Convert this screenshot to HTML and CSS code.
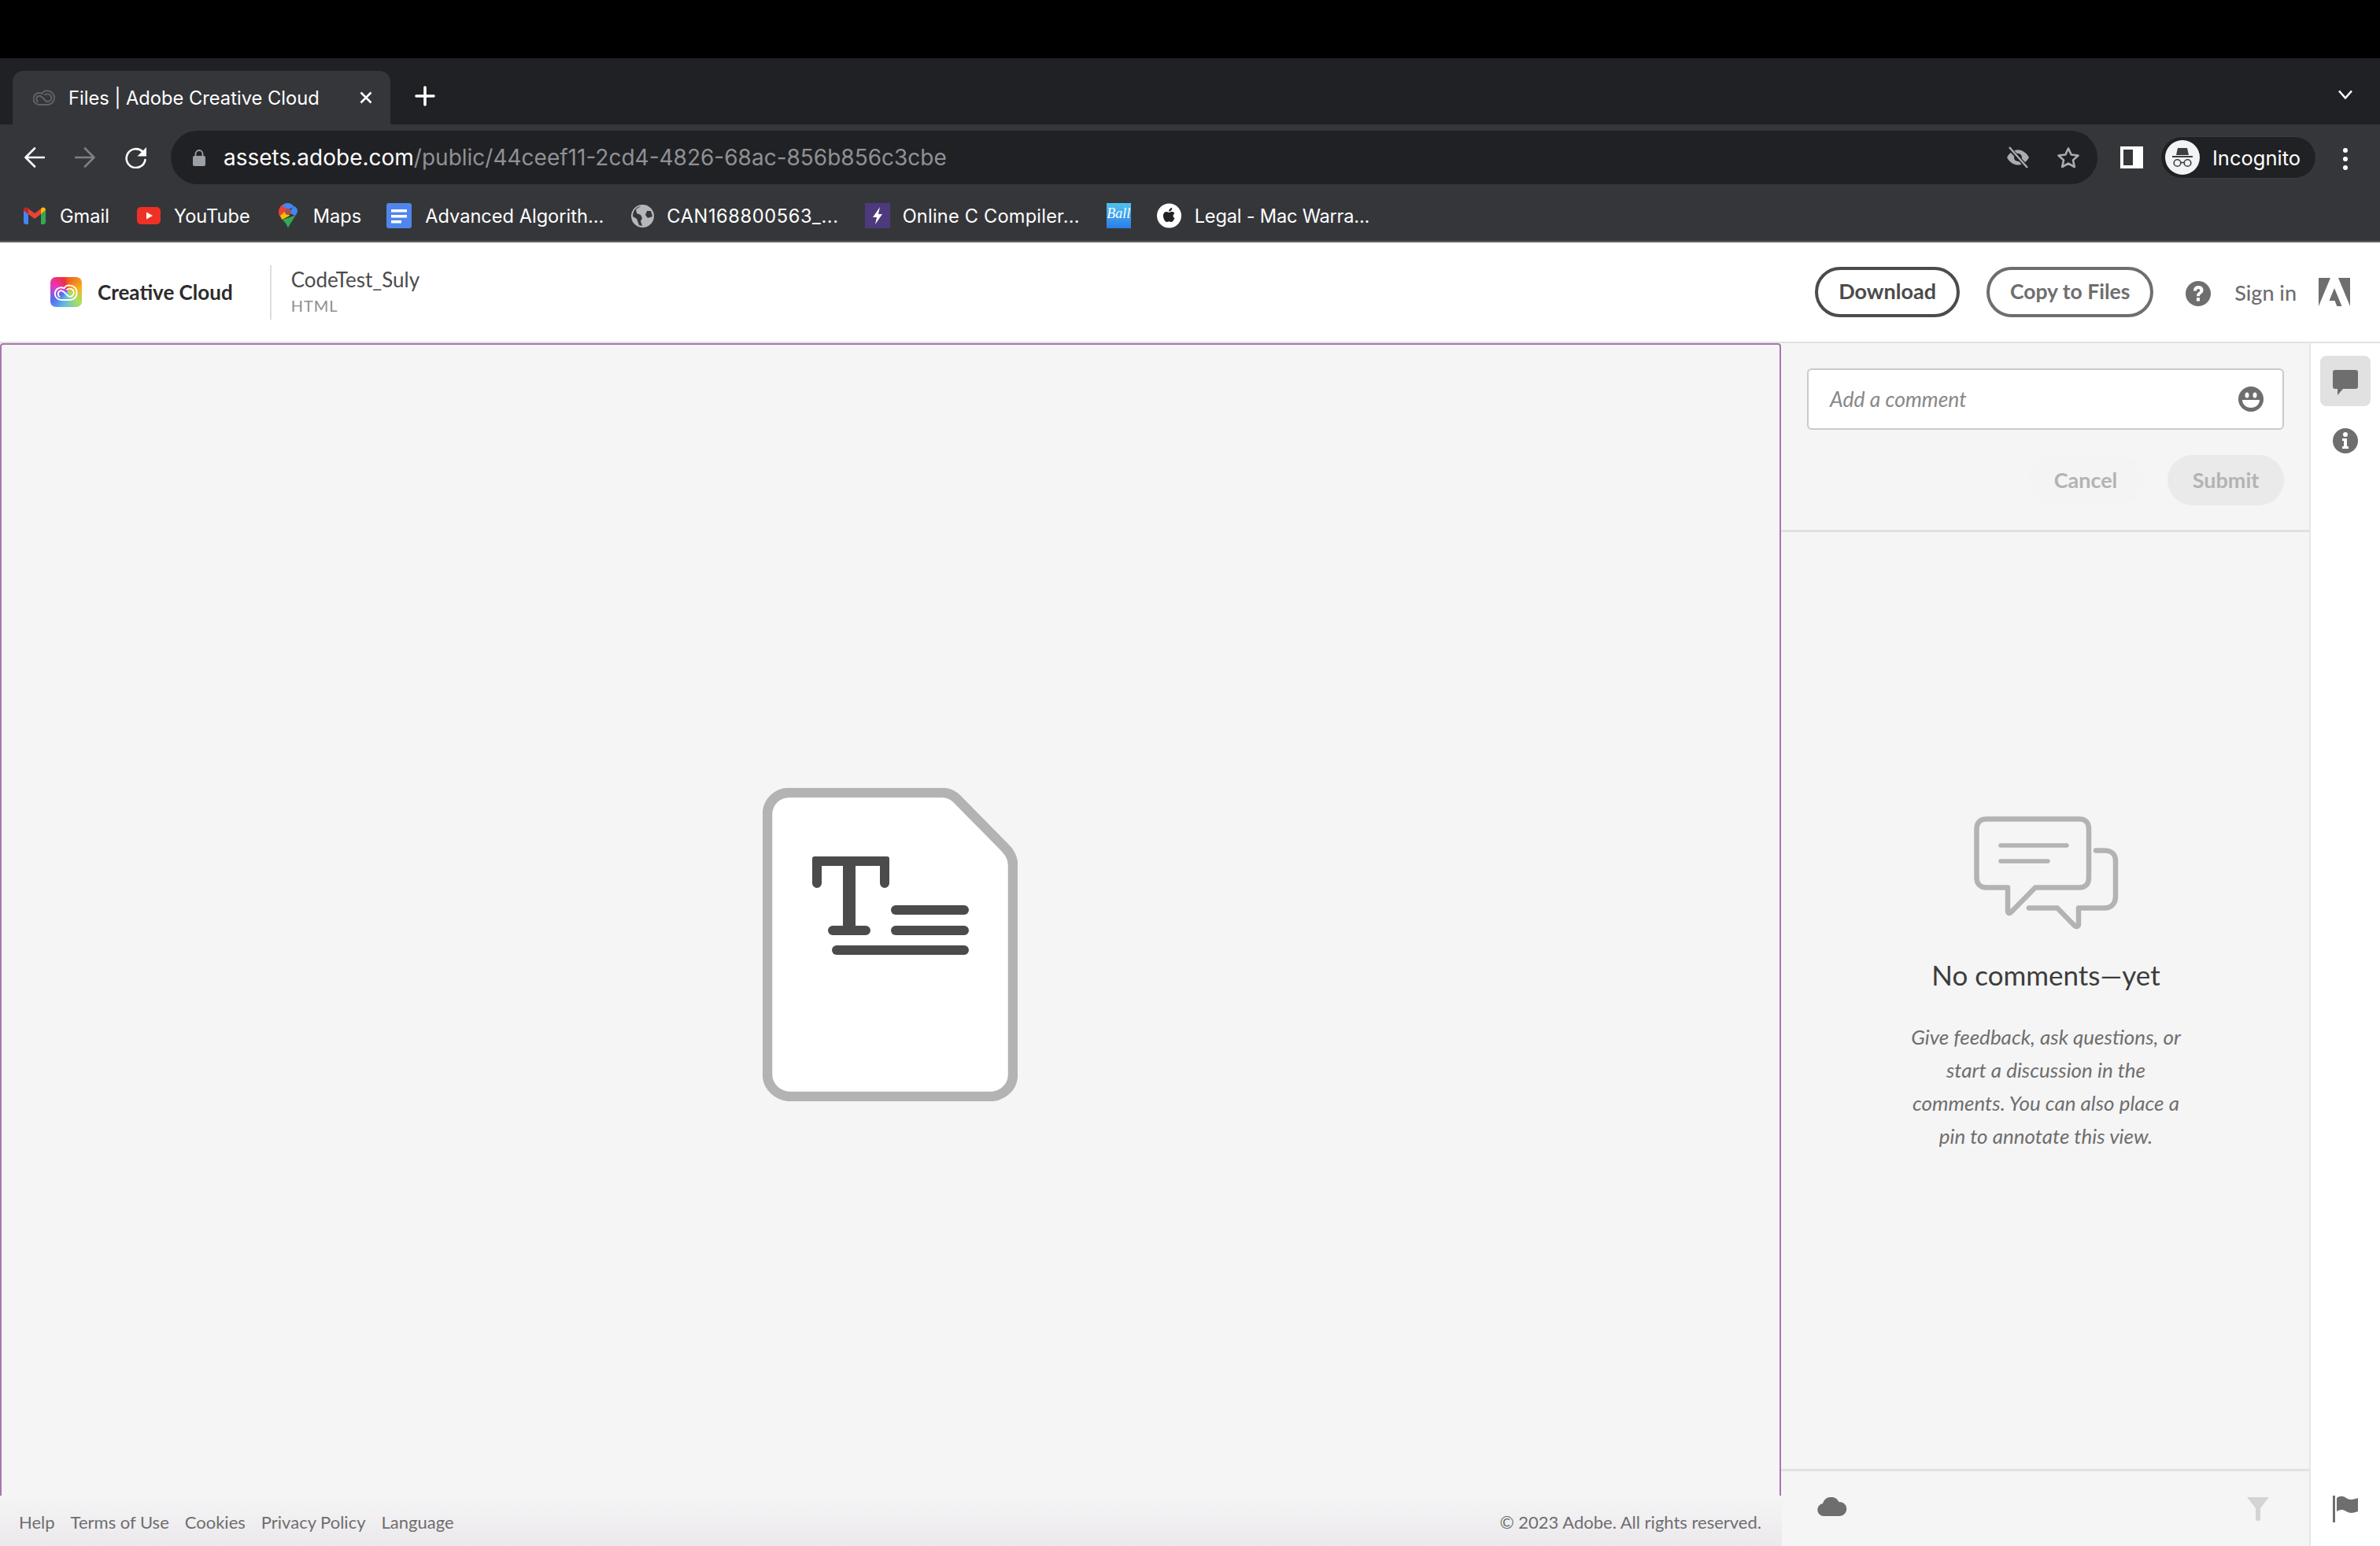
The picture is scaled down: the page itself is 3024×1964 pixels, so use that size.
FILE: index.html
```html
<!DOCTYPE html>
<html lang="en">
<head>
    <meta charset="UTF-8">
    <meta name="viewport" content="width=device-width, initial-scale=1.0">
    <title>Files | Adobe Creative Cloud</title>
    <link rel="stylesheet" href="styles.css">
</head>
<body>
    <div class="black-bar"></div>

    <!-- Browser tabs -->
    <div class="tab-strip">
        <div class="tab">
            <svg class="tab-favicon" width="28" height="20" viewBox="0 0 28 20" fill="none" stroke="#616266" stroke-width="2">
                <path d="M8 19A7.500 7.500 0 1 1 8 4C9.500 4 10.500 4.300 11.500 5C13 2.500 16 1 19 1.500C24 2 27 6 27 10C27 15.500 23 19 19 19Z"/>
                <path d="M6.500 15.500C3.500 14 3.500 9 7 8C9 7.300 10.500 8.500 12 10L15.500 13.500C17 15 19.500 15.500 21.500 14C24 12 24 8.500 21.500 6.500C19.500 5 16.500 5 14.500 7"/>
            </svg>
            <span class="tab-title">Files | Adobe Creative Cloud</span>
            <svg class="tab-close" width="16" height="16" viewBox="0 0 16 16" stroke="#fff" stroke-width="2.600">
                <path d="M1.500 1.500l13 13M14.500 1.500l-13 13"/>
            </svg>
        </div>
        <svg class="new-tab" width="26" height="26" viewBox="0 0 26 26" stroke="#fff" stroke-width="3.600" stroke-linecap="round">
            <path d="M13 2v22M2 13h22"/>
        </svg>
        <svg class="tab-list" width="20" height="12" viewBox="0 0 20 12" fill="none" stroke="#fff" stroke-width="2.600">
            <path d="M2 1.500l8 9 8-9"/>
        </svg>
    </div>

    <!-- Toolbar with address bar -->
    <div class="toolbar">
        <svg class="nav-back" width="26" height="26" viewBox="0 0 26 26" fill="none" stroke="#fff" stroke-width="2.600" stroke-linecap="round" stroke-linejoin="round">
            <path d="M25 13H2M13 1.500L1.500 13 13 24.500"/>
        </svg>
        <svg class="nav-forward" width="26" height="26" viewBox="0 0 26 26" fill="none" stroke="#7e7f82" stroke-width="2.600" stroke-linecap="round" stroke-linejoin="round">
            <path d="M1 13h23M13 1.500L24.500 13 13 24.500"/>
        </svg>
        <svg class="nav-reload" width="28" height="28" viewBox="0 0 28 28" fill="none">
            <path d="M22 6.500A12 12 0 1 0 25.500 17" stroke="#fff" stroke-width="2.600" stroke-linecap="round"/>
            <path d="M27 1v11.500H15.500z" fill="#fff"/>
        </svg>
        <div class="address-bar">
            <svg class="lock" width="16" height="21" viewBox="0 0 16 21">
                <path d="M3.500 8V5.500a4.500 4.500 0 0 1 9 0V8" fill="none" stroke="#9aa0a6" stroke-width="1.800"/>
                <rect x="0" y="8" width="16" height="13" rx="2" fill="#9aa0a6"/>
            </svg>
            <span class="url"><span class="url-host">assets.adobe.com</span>/public/44ceef11-2cd4-4826-68ac-856b856c3cbe</span>
            <svg class="eye-off" width="30" height="28" viewBox="0 0 30 28" fill="none">
                <path d="M1 14C5 7 10 4.500 15 4.500S25 7 29 14C25 21 20 23.500 15 23.500S5 21 1 14Z" fill="#aaadb0"/>
                <circle cx="15" cy="14" r="5" fill="#202124"/>
                <path d="M3 1l24 26" stroke="#202124" stroke-width="5"/>
                <path d="M4 1l23 26" stroke="#aaadb0" stroke-width="2.400"/>
            </svg>
            <svg class="star" width="30" height="29" viewBox="0 0 30 29" fill="none" stroke="#aaadb0" stroke-width="2.600" stroke-linejoin="round">
                <path d="M15 2.500l3.700 8 8.800 1-6.500 5.900 1.800 8.600L15 21.600 7.200 26l1.800-8.600L2.500 11.500l8.800-1z"/>
            </svg>
        </div>
        <div class="side-panel-icon"></div>
        <div class="profile-pill">
            <svg class="incognito-avatar" width="44" height="44" viewBox="0 0 44 44">
                <circle cx="22" cy="22" r="22" fill="#f1f3f4"/>
                <path d="M14 19l2-9h12l2 9z" fill="#3c4043"/>
                <rect x="9" y="20" width="26" height="2" fill="#3c4043"/>
                <circle cx="15.500" cy="29" r="4.300" fill="none" stroke="#3c4043" stroke-width="1.600"/>
                <circle cx="28.500" cy="29" r="4.300" fill="none" stroke="#3c4043" stroke-width="1.600"/>
                <path d="M19.800 28.500h4.400" stroke="#3c4043" stroke-width="1.600"/>
            </svg>
            <span class="profile-name">Incognito</span>
        </div>
        <div class="menu-dots"><i></i><i></i><i></i></div>
    </div>

    <!-- Bookmarks -->
    <div class="bookmarks">
        <a class="bookmark bm-gmail">
            <svg width="28" height="22" viewBox="0 0 28 22">
                <path d="M0 4v15a3 3 0 0 0 2 3h4V9z" fill="#4285f4"/>
                <path d="M28 4v15a3 3 0 0 1-2 3h-4V9z" fill="#34a853"/>
                <path d="M0 4l6 5 8 6 8-6V2l-8 6-8-6-1-1C2 0 0 1 0 4z" fill="#ea4335"/>
                <path d="M22 2v7l6-5c0-3-2-4-4-3.500z" fill="#fbbc04"/>
                <path d="M0 4l6 5V2L5 1C2 0 0 1 0 4z" fill="#c5221f"/>
            </svg>
            <span>Gmail</span>
        </a>
        <a class="bookmark bm-youtube">
            <svg width="30" height="22" viewBox="0 0 30 22">
                <rect width="30" height="22" rx="5" fill="#ee3124"/>
                <path d="M12 6.500l8 4.500-8 4.500z" fill="#fff"/>
            </svg>
            <span>YouTube</span>
        </a>
        <a class="bookmark bm-maps">
            <svg width="24" height="32" viewBox="0 0 24 32">
                <path d="M12 0C5 0 0 5 0 11.500c0 2.500.8 4.300 2 6L12 8z" fill="#ea4335"/>
                <path d="M12 0c-3 0-6 1-8 3.500L12 8l8-3C18 2 15.500 0 12 0z" fill="#4285f4"/>
                <path d="M20 4l-8 8 9 4c2-2 3-4 3-6.500 0-2-1.500-4-4-5.500z" fill="#4285f4"/>
                <path d="M2 16l8-7 4 7-9.500 5C3.500 19.500 2.500 18 2 16z" fill="#fbbc04"/>
                <path d="M21.500 15.500L5 21c2.500 3 5.500 6 7 11 1.500-5 6-9.500 9.500-16.500z" fill="#34a853"/>
                <circle cx="12" cy="11" r="4" fill="#a5524a"/>
            </svg>
            <span>Maps</span>
        </a>
        <a class="bookmark bm-docs">
            <svg width="32" height="32" viewBox="0 0 32 32">
                <rect width="32" height="32" rx="3" fill="#4f86ec"/>
                <path d="M6 8h20v3.500H6zM6 15h20v3.500H6zM6 22h13v3.500H6z" fill="#fff"/>
            </svg>
            <span>Advanced Algorith...</span>
        </a>
        <a class="bookmark bm-globe">
            <svg width="29" height="29" viewBox="0 0 29 29">
                <circle cx="14.500" cy="14.500" r="14.500" fill="#b4b6b9"/>
                <path d="M12 2L6 6l1 5 5 2 2 4-2 4 2 6-4-1-3-8-5-3C2 8 6 3 12 2zM20 8l5 0 2 7-6 2-3-4z" fill="#35363a"/>
            </svg>
            <span>CAN168800563_...</span>
        </a>
        <a class="bookmark bm-bolt">
            <svg width="32" height="32" viewBox="0 0 32 32">
                <rect width="32" height="32" fill="#4d3a7d"/>
                <path d="M19 5l-9 13h5l-2 9 9-13h-5z" fill="#fff"/>
            </svg>
            <span>Online C Compiler...</span>
        </a>
        <a class="bookmark bm-ball">
            <span class="ball-icon">Ball</span>
        </a>
        <a class="bookmark bm-legal">
            <svg width="31" height="32" viewBox="0 0 31 32">
                <circle cx="15.500" cy="16" r="15.500" fill="#fff"/>
                <path d="M20.500 16.500c0-2.500 2-3.500 2-3.500-1-1.700-3-2-3.700-2-1.500 0-2.600.9-3.400.9S13.400 11 12.200 11c-1.700 0-4.700 1.500-4.200 6 .4 3.300 2.500 7 4.400 7 1 0 1.700-.8 3-.8s1.800.8 3 .8c1.800 0 3.500-3.500 4-5-.1 0-1.900-.8-1.900-2.500zM18.200 9.300c.8-1 1.200-2 1-3.300-1 0-2.200.7-3 1.600-.7.800-1.200 2-1 3.100 1.100.1 2.300-.5 3-1.400z" fill="#202124"/>
            </svg>
            <span>Legal - Mac Warra...</span>
        </a>
    </div>

    <!-- Adobe header -->
    <header class="app-header">
        <div class="cc-logo">
            <svg width="28" height="20" viewBox="0 0 28 20" fill="none" stroke="#fff" stroke-width="1.800">
                <path d="M8 19A7.500 7.500 0 1 1 8 4C9.500 4 10.500 4.300 11.500 5C13 2.500 16 1 19 1.500C24 2 27 6 27 10C27 15.500 23 19 19 19Z"/>
                <path d="M6.500 15.500C3.500 14 3.500 9 7 8C9 7.300 10.500 8.500 12 10L15.500 13.500C17 15 19.500 15.500 21.500 14C24 12 24 8.500 21.500 6.500C19.500 5 16.500 5 14.500 7"/>
            </svg>
        </div>
        <span class="cc-name">Creative Cloud</span>
        <div class="file-info">
            <div class="file-name">CodeTest_Suly</div>
            <div class="file-type">HTML</div>
        </div>
        <button class="pill-btn download-btn">Download</button>
        <button class="pill-btn copy-btn">Copy to Files</button>
        <svg class="help-icon" width="32" height="32" viewBox="0 0 32 32">
            <circle cx="16" cy="16" r="16" fill="#6e6e6e"/>
            <path d="M10 12.500C10 8.500 12.500 6 16.200 6S22.500 8.300 22.500 11.500C22.500 14 21.300 15.200 19.500 16.400 18.200 17.300 18 17.900 18 19.300H14C14 16.800 14.700 15.500 16.500 14.300 17.800 13.400 18.300 12.800 18.300 12 18.300 10.800 17.400 10 16.200 10 14.800 10 14 11 13.900 12.500zM13.900 21.200H18V25.500H13.900z" fill="#fff"/>
        </svg>
        <span class="sign-in">Sign in</span>
        <svg class="adobe-logo" width="40" height="36" viewBox="0 0 40 36" fill="#6e6e6e">
            <path d="M15 0H0v36zM25 0h15v36zM20 13l9.500 23h-6.200l-2.800-7h-7z"/>
        </svg>
    </header>

    <main class="workspace">
        <section class="viewer">
            <svg width="324" height="398" viewBox="0 0 324 398" fill="none">
                <path d="M34 6H228C236 6 242 9 247 14L308 76C314 82 318 90 318 98V364C318 381 304 392 288 392H36C20 392 6 380 6 364V34C6 18 18 6 34 6Z" fill="#fff" stroke="#b3b3b3" stroke-width="12.500"/>
                <g fill="#4b4b4b">
                    <path d="M63 90a3 3 0 0 1 3-3h92a3 3 0 0 1 3 3v31a6 6 0 0 1-12 0V99h-31v76h13a6 6 0 0 1 0 12H89a6 6 0 0 1 0-12h13V99H75v22a6 6 0 0 1-12 0z"/>
                    <rect x="163" y="149" width="99" height="12" rx="6"/>
                    <rect x="163" y="175" width="99" height="12" rx="6"/>
                    <rect x="88" y="200" width="174" height="12" rx="6"/>
                </g>
            </svg>
            <footer class="legal-footer">
                <nav class="legal-links">
                    <a>Help</a>
                    <a>Terms of Use</a>
                    <a>Cookies</a>
                    <a>Privacy Policy</a>
                    <a>Language</a>
                </nav>
                <span class="copyright">© 2023 Adobe. All rights reserved.</span>
            </footer>
        </section>

        <section class="comments">
            <div class="comment-form">
                <div class="comment-input">
                    <span class="comment-placeholder">Add a comment</span>
                    <svg width="32" height="32" viewBox="0 0 32 32">
                        <circle cx="16" cy="16" r="16" fill="#6e6e6e"/>
                        <ellipse cx="11" cy="11" rx="2.500" ry="3.500" fill="#fff"/>
                        <ellipse cx="21" cy="11" rx="2.500" ry="3.500" fill="#fff"/>
                        <path d="M5 17h22c0 6-5 10-11 10S5 23 5 17z" fill="#fff"/>
                    </svg>
                </div>
                <div class="comment-actions">
                    <button class="cancel-btn">Cancel</button>
                    <button class="submit-btn">Submit</button>
                </div>
            </div>
            <div class="comments-empty">
                <svg width="184" height="144" viewBox="0 0 184 144" fill="none" stroke="#b3b3b3" stroke-width="6.500" stroke-linecap="round" stroke-linejoin="round">
                    <path d="M16 3.500H134C142 3.500 146 8 146 16V78C146 86 142 90.500 134 90.500H78L47 122C45 124 43 123 43 120V90.500H16C8 90.500 3.500 86 3.500 78V16C3.500 8 8 3.500 16 3.500Z"/>
                    <path d="M34 37H118M34 57H94" stroke-width="5.500"/>
                    <path d="M155 43.500H166C174 43.500 180 48 180 56V102C180 110 175 116.500 166 116.500H133V137C133 140 130 141 128 139L106 116.500H70"/>
                </svg>
                <h2>No comments—yet</h2>
                <p>Give feedback, ask questions, or<br>start a discussion in the<br>comments. You can also place a<br>pin to annotate this view.</p>
            </div>
            <div class="comments-bottom">
                <svg width="38" height="24" viewBox="0 0 38 24" fill="#6e6e6e">
                    <path d="M8 24a8 8 0 0 1-1-15.900A11 11 0 0 1 27.500 6 9 9 0 0 1 29 24z"/>
                </svg>
                <svg width="28" height="30" viewBox="0 0 28 30" fill="#d4d4d4">
                    <path d="M0 0h28L17 14v14a2 2 0 0 1-2 2h-2a2 2 0 0 1-2-2V14z"/>
                </svg>
            </div>
        </section>

        <aside class="rail">
            <div class="rail-top">
                <div class="rail-btn active">
                    <svg width="32" height="32" viewBox="0 0 32 32" fill="#6e6e6e">
                        <path d="M3 0h26a3 3 0 0 1 3 3v18a3 3 0 0 1-3 3H13L6 32v-8H3a3 3 0 0 1-3-3V3a3 3 0 0 1 3-3z"/>
                    </svg>
                </div>
                <div class="rail-btn">
                    <svg width="32" height="32" viewBox="0 0 32 32">
                        <circle cx="16" cy="16" r="16" fill="#6e6e6e"/>
                        <circle cx="16" cy="8" r="3" fill="#fff"/>
                        <path d="M12 13h6v10h2v3h-8v-3h2v-7h-2z" fill="#fff"/>
                    </svg>
                </div>
            </div>
            <svg class="flag-icon" width="32" height="34" viewBox="0 0 32 34" fill="#6e6e6e">
                <path d="M0 0h3v34H0zM5 3c4-3 8-3 12 0s10 2 15 0v17c-5 2-10 3-15 0s-8-2-12 0z"/>
            </svg>
        </aside>
    </main>
</body>
</html>
```

FILE: styles.css
```css
* {
    box-sizing: border-box;
}
html, body {
    margin: 0;
    height: 100%;
}
body {
    width: 3024px;
    height: 1964px;
    display: flex;
    flex-direction: column;
    overflow: hidden;
    font-family: Lato, "Open Sans", sans-serif;
    background-color: #fff;
}
svg {
    display: block;
    flex-shrink: 0;
}

.black-bar {
    height: 74px;
    background-color: #000;
}

/* Browser chrome */
.tab-strip {
    height: 84px;
    display: flex;
    align-items: center;
    padding-left: 16px;
    background-color: #202124;
    font-family: Inter, "Liberation Sans", sans-serif;
}
.tab {
    width: 480px;
    height: 68px;
    margin-top: 16px;
    display: flex;
    align-items: center;
    padding: 0 23px 0 26px;
    border-radius: 14px 14px 0 0;
    background-color: #35363a;
    color: #fff;
}
.tab-title {
    margin-left: 17px;
    font-size: 23.7px;
    white-space: nowrap;
}
.tab-close {
    margin-left: auto;
}
.new-tab {
    margin-left: 31px;
    margin-top: 12px;
}
.tab-list {
    margin-left: auto;
    margin-right: 34px;
    margin-top: 8px;
}

.toolbar {
    height: 76px;
    display: flex;
    align-items: flex-start;
    background-color: #35363a;
    padding-top: 8px;
    font-family: Inter, "Liberation Sans", sans-serif;
}
.nav-back {
    margin: 21px 0 0 31px;
}
.nav-forward {
    margin: 21px 0 0 38px;
}
.nav-reload {
    margin: 20px 0 0 38px;
}
.address-bar {
    width: 2448px;
    height: 68px;
    margin-left: 30px;
    display: flex;
    align-items: center;
    padding: 0 22px 0 28px;
    border-radius: 34px;
    background-color: #202124;
    color: #8f9195;
}
.url {
    margin-left: 23px;
    font-size: 28px;
    white-space: nowrap;
}
.url-host {
    color: #fff;
}
.eye-off {
    margin-left: auto;
}
.star {
    margin-left: 34px;
}
.side-panel-icon {
    width: 29px;
    height: 28px;
    margin: 20px 0 0 29px;
    border: 4px solid #fff;
    border-right-width: 13px;
}
.profile-pill {
    width: 198px;
    height: 54px;
    margin: 7px 0 0 22px;
    display: flex;
    align-items: center;
    padding-left: 5px;
    border-radius: 27px;
    background-color: #202124;
    border: 1px solid #3c3d41;
}
.profile-name {
    margin-left: 16px;
    font-size: 25.5px;
    color: #fff;
}
.menu-dots {
    margin: 22px 0 0 34px;
    display: flex;
    flex-direction: column;
    gap: 5px;
}
.menu-dots i {
    display: block;
    width: 6px;
    height: 6px;
    border-radius: 50%;
    background-color: #fff;
}

.bookmarks {
    height: 74px;
    display: flex;
    align-items: center;
    padding: 8px 0 0 30px;
    background-color: #35363a;
    border-bottom: 2px solid #5f6064;
    color: #fff;
    font-family: Inter, "Liberation Sans", sans-serif;
    font-size: 23.6px;
}
.bookmark {
    display: flex;
    align-items: center;
    white-space: nowrap;
}
.bm-gmail span {
    margin-left: 18px;
}
.bm-youtube {
    margin-left: 35px;
}
.bm-youtube span {
    margin-left: 17px;
}
.bm-maps {
    margin-left: 36px;
}
.bm-maps span {
    margin-left: 20px;
}
.bm-docs {
    margin-left: 32px;
}
.bm-docs span {
    margin-left: 17px;
}
.bm-globe {
    margin-left: 35px;
}
.bm-globe span {
    margin-left: 16px;
    letter-spacing: 0.6px;
}
.bm-bolt {
    margin-left: 33px;
}
.bm-bolt span {
    margin-left: 16px;
    letter-spacing: 0.2px;
}
.bm-ball {
    margin-left: 34px;
}
.ball-icon {
    display: block;
    width: 31px;
    height: 32px;
    padding-top: 3px;
    overflow: hidden;
    background: linear-gradient(180deg, #4fc3f0, #2b7de9);
    color: #fff;
    font-family: "Liberation Serif", serif;
    font-size: 18px;
    font-style: italic;
    text-align: center;
}
.bm-legal {
    margin-left: 33px;
}
.bm-legal span {
    margin-left: 17px;
    letter-spacing: -0.2px;
}

/* Adobe header */
.app-header {
    height: 128px;
    display: flex;
    align-items: center;
    padding-left: 64px;
    background-color: #fff;
    border-bottom: 2px solid #e1e1e1;
}
.cc-logo {
    width: 40px;
    height: 38px;
    display: flex;
    align-items: center;
    justify-content: center;
    border-radius: 7px;
    background: conic-gradient(from 0deg at 55% 45%, #f05a22, #f7b21b 22%, #a8e05f 38%, #5cb8e8 55%, #5a6cf0 66%, #e836c0 80%, #ee2f3a 95%, #f05a22);
}
.cc-logo svg {
    width: 30px;
    height: 21px;
}
.cc-name {
    margin-left: 20px;
    font-size: 26px;
    font-weight: 700;
    color: #2c2c2c;
}
.file-info {
    height: 69px;
    margin-left: 47px;
    padding-left: 25px;
    border-left: 2px solid #dedede;
}
.file-name {
    margin-top: 1px;
    font-size: 26px;
    line-height: 34px;
    color: #4b4b4b;
}
.file-type {
    font-size: 20px;
    line-height: 32px;
    letter-spacing: 1px;
    color: #8e8e8e;
}
.pill-btn {
    height: 64px;
    padding: 0 0 3px;
    border-radius: 32px;
    background-color: #fff;
    font-family: inherit;
    font-size: 27px;
    font-weight: 700;
}
.download-btn {
    width: 184px;
    margin-left: auto;
    border: 4px solid #4b4b4b;
    color: #4b4b4b;
}
.copy-btn {
    width: 212px;
    margin-left: 34px;
    border: 4px solid #6e6e6e;
    color: #6e6e6e;
    font-size: 26.5px;
}
.help-icon {
    margin-left: 41px;
    margin-top: 4px;
}
.sign-in {
    margin-left: 30px;
    font-size: 27px;
    font-weight: 500;
    color: #6e6e6e;
}
.adobe-logo {
    margin-left: 28px;
    margin-right: 38px;
}

/* Workspace */
.workspace {
    flex: 1;
    display: flex;
    min-height: 0;
}
.viewer {
    position: relative;
    width: 2263px;
    display: flex;
    align-items: center;
    justify-content: center;
    padding: 0 1px 2px 0;
    background-color: #f5f5f5;
    border: 2px solid #a877ae;
    border-bottom: none;
    border-radius: 4px 4px 0 0;
}
.legal-footer {
    position: absolute;
    left: -2px;
    right: -3px;
    bottom: 0;
    height: 64px;
    display: flex;
    align-items: center;
    justify-content: space-between;
    padding: 2px 26px 0 24px;
    background: linear-gradient(180deg, #f5f5f5, #ece8ed);
    font-size: 22px;
    color: #6e6e6e;
}
.legal-links {
    display: flex;
    gap: 20px;
}

.comments {
    width: 673px;
    display: flex;
    flex-direction: column;
    background-color: #f5f5f5;
    border-right: 2px solid #e6e6e6;
}
.comment-form {
    height: 240px;
    padding: 32px 32px 0 33px;
    border-bottom: 3px solid #e1e1e1;
}
.comment-input {
    height: 78px;
    display: flex;
    align-items: center;
    justify-content: space-between;
    padding: 0 24px 0 27px;
    background-color: #fff;
    border: 2px solid #cacaca;
    border-radius: 6px;
}
.comment-placeholder {
    font-size: 26.5px;
    font-style: italic;
    color: #888;
}
.comment-actions {
    display: flex;
    justify-content: flex-end;
    gap: 32px;
    margin-top: 32px;
}
.cancel-btn,
.submit-btn {
    height: 64px;
    padding-bottom: 3px;
    border: none;
    border-radius: 32px;
    font-family: inherit;
    font-size: 27px;
    font-weight: 700;
    color: #b3b3b3;
}
.cancel-btn {
    width: 144px;
    background-color: #f4f4f4;
}
.submit-btn {
    width: 148px;
    background-color: #eaeaea;
}
.comments-empty {
    flex: 1;
    display: flex;
    flex-direction: column;
    align-items: center;
    padding: 361px 0 0 2px;
}
.comments-empty h2 {
    margin: 36px 0 0;
    font-size: 35px;
    font-weight: 400;
    color: #3d3d3d;
}
.comments-empty p {
    margin: 37px 0 0;
    font-size: 26px;
    font-style: italic;
    line-height: 42px;
    text-align: center;
    color: #6e6e6e;
}
.comments-bottom {
    height: 98px;
    display: flex;
    justify-content: space-between;
    align-items: flex-start;
    padding: 33px 51px 0 46px;
    border-top: 3px solid #e1e1e1;
}

.rail {
    flex: 1;
    display: flex;
    flex-direction: column;
    justify-content: space-between;
    align-items: center;
    padding: 16px 0 30px;
    background-color: #fff;
}
.rail-top {
    display: flex;
    flex-direction: column;
    gap: 10px;
}
.rail-btn {
    width: 64px;
    height: 64px;
    display: flex;
    align-items: center;
    justify-content: center;
    padding-top: 4px;
    border-radius: 8px;
}
.rail-btn.active {
    background-color: #e1e1e1;
}
```
